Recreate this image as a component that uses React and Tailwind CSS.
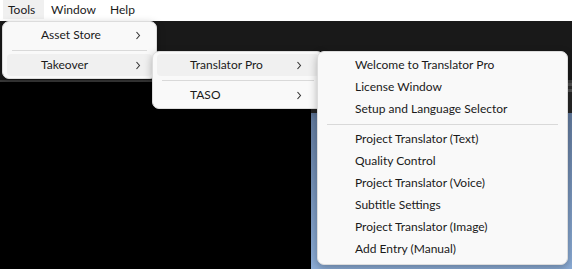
import React from 'react';

const font = { fontFamily: 'Lato, "Liberation Sans", sans-serif' };

const Chevron = () => (
    <svg width="6" height="9" viewBox="0 0 6 9" className="text-[#333]">
        <path d="M1.5 1 L4.5 4.5 L1.5 8" fill="none" stroke="currentColor" strokeWidth="1.1" />
    </svg>
);

const Row = ({ label, sub, active, textLeft = 'pl-[32px]', chevronRight = 'pr-[12px]' }) => (
    <div
        className={`h-[22px] mx-[4px] rounded-[4px] flex items-center justify-between ${textLeft} ${chevronRight} ${
            active ? 'bg-[#f0f0f0]' : ''
        }`}
    >
        <span className="text-[12px] text-[#1a1a1a] leading-none">{label}</span>
        {sub && <Chevron />}
    </div>
);

const Separator = () => (
    <div className="h-[8px] flex items-center px-[9px]">
        <div className="h-px w-full bg-[#d9d9d9]" />
    </div>
);

const menuBox = 'absolute bg-[#f9f9f9] border border-[#dcdcdc] rounded-[7px] shadow-[0_3px_8px_rgba(0,0,0,0.28)] py-[2px]';

export default function App() {
    const translatorItems = [
        'Project Translator (Text)',
        'Quality Control',
        'Project Translator (Voice)',
        'Subtitle Settings',
        'Project Translator (Image)',
        'Add Entry (Manual)',
    ];

    return (
        <div className="relative w-[572px] h-[269px] overflow-hidden flex flex-col bg-black" style={font}>
            {/* menubar */}
            <div className="h-[21px] bg-white flex items-start text-[12px] text-[#1a1a1a]">
                <div className="ml-[3px] w-[41px] h-[19px] pl-[5px] flex items-center bg-[#f0f0f0]">Tools</div>
                <div className="h-[19px] pl-[7px] w-[59px] flex items-center">Window</div>
                <div className="h-[19px] pl-[7px] flex items-center">Help</div>
            </div>

            {/* editor background */}
            <div className="h-[59px] bg-[#191919]" />
            <div className="flex-1 flex">
                <div className="flex-1 flex flex-col">
                    <div className="h-[2px] bg-[#3a3a3a]" />
                    <div className="flex-1 bg-black" />
                </div>
                <div className="w-[261px] flex flex-col">
                    <div className="h-[12px] flex flex-col">
                        <div className="h-[3px] bg-[#3a3a3a]" />
                        <div className="h-[3px] bg-[#505050]" />
                        <div className="h-[3px] bg-[#2e2e2e]" />
                        <div className="h-[3px] bg-[#505050]" />
                    </div>
                    <div className="h-[21px] bg-[#262626]" />
                    <div className="flex-1 bg-gradient-to-b from-[#61799c] to-[#8cadd7]" />
                </div>
            </div>

            {/* Tools menu */}
            <div className={`${menuBox} left-[2px] top-[21px] w-[155px]`}>
                <Row label="Asset Store" sub textLeft="pl-[34px]" chevronRight="pr-[11px]" />
                <Separator />
                <Row label="Takeover" sub active textLeft="pl-[34px]" chevronRight="pr-[11px]" />
            </div>

            {/* Takeover submenu */}
            <div className={`${menuBox} left-[152px] top-[51px] w-[172px]`}>
                <Row label="Translator Pro" sub active textLeft="pl-[33px]" chevronRight="pr-[17px]" />
                <Separator />
                <Row label="TASO" sub textLeft="pl-[33px]" chevronRight="pr-[17px]" />
            </div>

            {/* Translator Pro submenu */}
            <div className={`${menuBox} left-[317px] top-[51px] w-[251px] pb-[4px]`}>
                <Row label="Welcome to Translator Pro" textLeft="pl-[33px]" />
                <Row label="License Window" textLeft="pl-[33px]" />
                <Row label="Setup and Language Selector" textLeft="pl-[33px]" />
                <Separator />
                {translatorItems.map((item) => (
                    <Row key={item} label={item} textLeft="pl-[33px]" />
                ))}
            </div>
        </div>
    );
}
